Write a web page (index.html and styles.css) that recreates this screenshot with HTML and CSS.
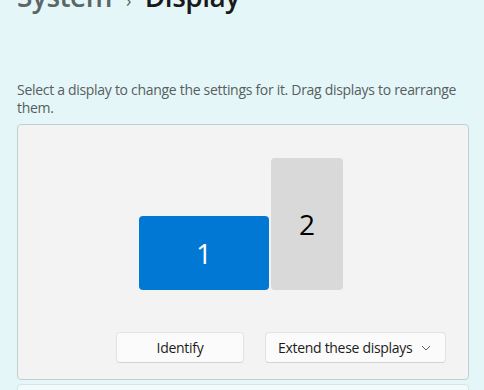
FILE: index.html
```html
<!DOCTYPE html>
<html lang="en">
<head>
    <meta charset="UTF-8">
    <meta name="viewport" content="width=device-width, initial-scale=1.0">
    <title>Display</title>
    <link rel="stylesheet" href="styles.css">
</head>
<body>

    <div class="page">
        <h1 class="breadcrumb">
            <span class="crumb-parent">System</span>
            <span class="crumb-sep">&#8250;</span>
            <span class="crumb-current">Display</span>
        </h1>

        <p class="hint">Select a display to change the settings for it. Drag displays to rearrange them.</p>

        <div class="card">
            <div class="monitors">
                <div class="monitor monitor-main">1</div>
                <div class="monitor monitor-second">2</div>
            </div>
            <div class="actions">
                <button class="btn">Identify</button>
                <button class="btn dropdown">
                    <span>Extend these displays</span>
                    <svg width="10" height="6" viewBox="0 0 10 6">
                        <path d="M1 1 L5 5 L9 1" fill="none" stroke="#5f5f5f" stroke-width="1"/>
                    </svg>
                </button>
            </div>
        </div>

        <div class="card next-card"></div>
    </div>

</body>
</html>
```

FILE: styles.css
```css
body {
    margin: 0;
    font-family: "Open Sans", "Noto Sans", sans-serif;
    background-color: #e5f6f8;
    color: #1b1b1b;
    overflow: hidden;
}
.page {
    padding: 0 15px 0 17px;
}
.breadcrumb {
    margin: -23px 0 0;
    font-size: 28px;
    font-weight: 600;
    line-height: 38px;
    letter-spacing: -0.5px;
    display: flex;
    align-items: baseline;
    gap: 14px;
}
.crumb-parent {
    color: #5d6666;
}
.crumb-sep {
    color: #5d6666;
    font-size: 18px;
    font-weight: 400;
}
.crumb-current {
    color: #1a1a1a;
}
.hint {
    margin: 62px 0 0;
    font-size: 14px;
    line-height: 18px;
    letter-spacing: -0.3px;
    color: #565e5e;
    width: 448px;
}
.card {
    margin-top: 7px;
    background-color: #f3f3f3;
    border: 1px solid #bfd0d0;
    border-radius: 4px;
    height: 256px;
    box-sizing: border-box;
}
.monitors {
    display: flex;
    justify-content: center;
    align-items: flex-end;
    gap: 2px;
    padding: 33px 4px 0 0;
    height: 132px;
}
.monitor {
    display: flex;
    justify-content: center;
    align-items: center;
    border-radius: 4px;
    font-size: 28px;
}
.monitor-main {
    width: 130px;
    height: 74px;
    background-color: #0078d4;
    color: #ffffff;
}
.monitor-second {
    width: 72px;
    height: 132px;
    background-color: #d9d9d9;
    color: #000000;
}
.actions {
    display: flex;
    justify-content: flex-end;
    gap: 21px;
    padding: 42px 22px 0 0;
}
.btn {
    font-family: inherit;
    font-size: 14px;
    letter-spacing: -0.3px;
    color: #1b1b1b;
    background-color: #fbfbfb;
    border: 1px solid #e2e2e2;
    border-bottom-color: #d2d2d2;
    border-radius: 4px;
    height: 31px;
    width: 128px;
    padding: 0 12px;
}
.dropdown {
    width: 181px;
    display: flex;
    justify-content: space-between;
    align-items: center;
    padding-right: 14px;
}
.next-card {
    margin-top: 4px;
    height: 20px;
    background-color: #f1fbfb;
    border-color: #d3e6e6;
}
```
